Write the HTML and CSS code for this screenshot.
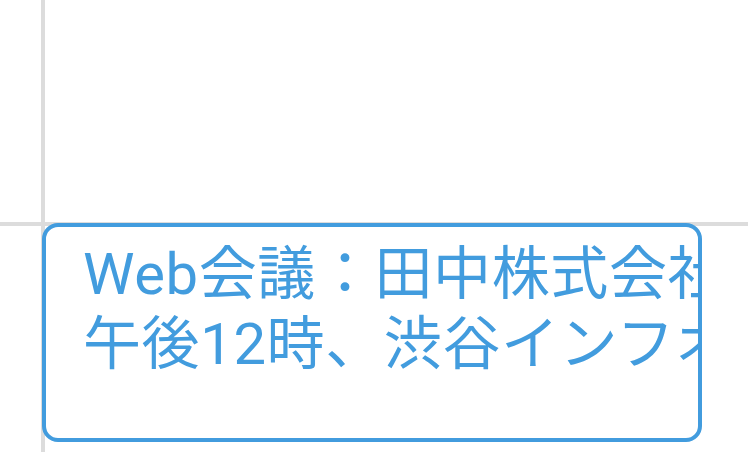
FILE: index.html
```html
<!DOCTYPE html>
<html lang="ja">
<head>
<meta charset="utf-8">
<title>Calendar event</title>
<link rel="stylesheet" href="styles.css">
</head>
<body>
<div class="calendar">
  <div class="row row-top">
    <div class="gutter"></div>
    <div class="cell"></div>
  </div>
  <div class="row row-bottom">
    <div class="gutter"></div>
    <div class="cell"></div>
  </div>
  <div class="event">
    <div class="event-line">Web会議：田中株式会社と打ち合わせ</div>
    <div class="event-line">午後12時、渋谷インフオス</div>
  </div>
</div>
</body>
</html>
```

FILE: styles.css
```css
html, body {
  margin: 0;
  padding: 0;
  background: #ffffff;
}

.calendar {
  position: relative;
  width: 748px;
  height: 452px;
  display: flex;
  flex-direction: column;
  overflow: hidden;
}

.row {
  display: flex;
}

.row-top {
  height: 222px;
}

.row-bottom {
  flex: 1;
  border-top: 4px solid #dcdcdc;
}

.gutter {
  width: 41px;
}

.cell {
  flex: 1;
  border-left: 4px solid #dcdcdc;
}

.event {
  position: absolute;
  left: 42px;
  top: 223px;
  width: 660px;
  height: 219px;
  box-sizing: border-box;
  border: 4px solid #429cde;
  border-radius: 16px;
  background: #ffffff;
  padding: 12px 0 0 37px;
  overflow: hidden;
  color: #429cde;
  font-family: Roboto, "Noto Sans CJK JP", sans-serif;
  font-size: 58px;
  letter-spacing: 0.6px;
  line-height: 70px;
}

.event-line {
  white-space: nowrap;
}
```
